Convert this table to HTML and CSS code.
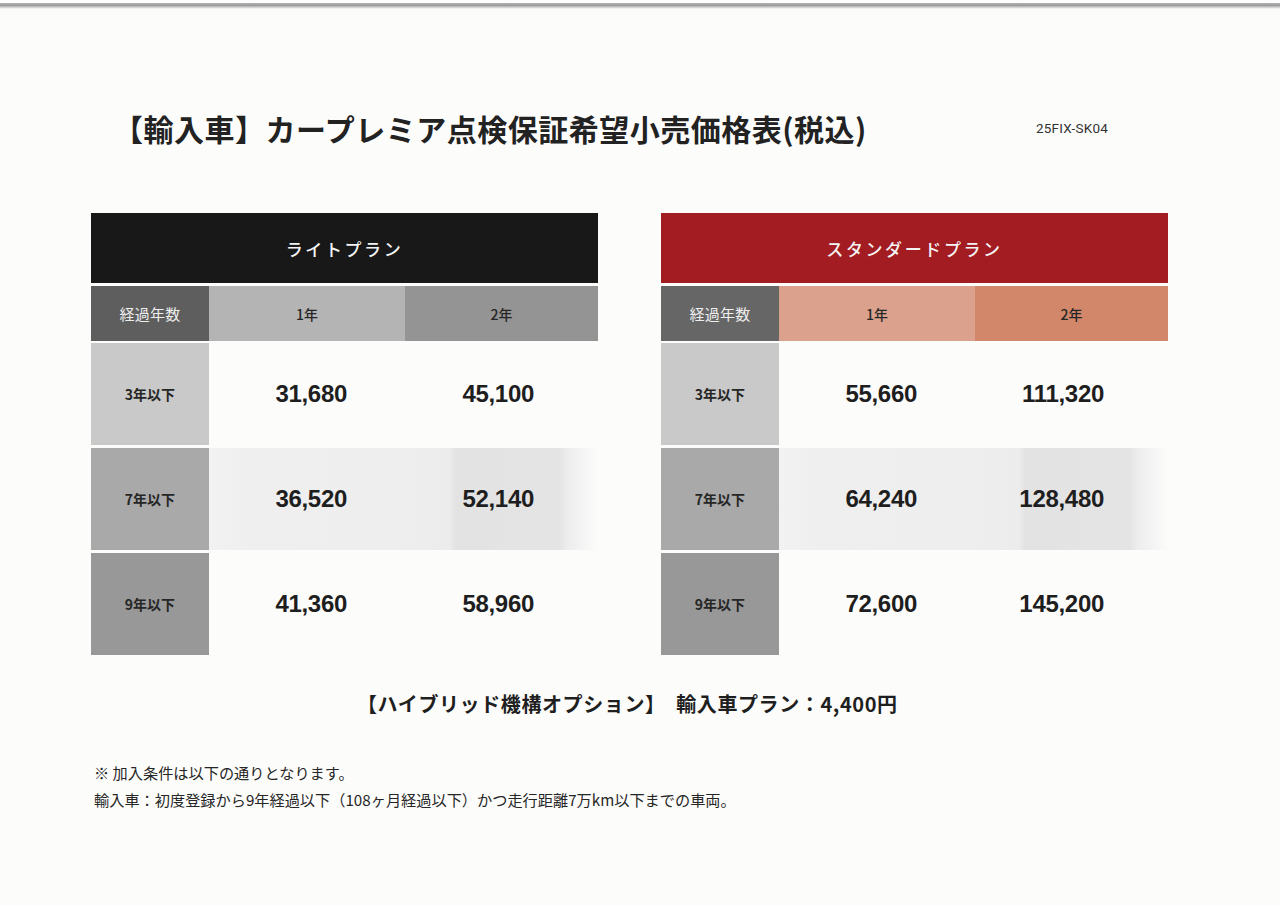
FILE: index.html
```html
<!DOCTYPE html>
<html lang="ja">
<head>
<meta charset="utf-8">
<title>カープレミア点検保証希望小売価格表</title>
<link rel="stylesheet" href="styles.css">
</head>
<body>
<div class="scanline"></div>
<header class="head">
  <h1 class="title">【輸入車】カープレミア点検保証希望小売価格表(税込)</h1>
  <span class="code">25FIX-SK04</span>
</header>

<main class="tables">
  <section class="plan plan-lite">
    <div class="plan-name">ライトプラン</div>
    <div class="sub sub-label">経過年数</div>
    <div class="sub sub-y1">1年</div>
    <div class="sub sub-y2">2年</div>

    <div class="rl rl-3">3年以下</div>
    <div class="val v1">31,680</div>
    <div class="val v2">45,100</div>

    <div class="rl rl-7">7年以下</div>
    <div class="val v1 band1">36,520</div>
    <div class="val v2 band2">52,140</div>

    <div class="rl rl-9">9年以下</div>
    <div class="val v1">41,360</div>
    <div class="val v2">58,960</div>
  </section>

  <section class="plan plan-std">
    <div class="plan-name">スタンダードプラン</div>
    <div class="sub sub-label">経過年数</div>
    <div class="sub sub-y1">1年</div>
    <div class="sub sub-y2">2年</div>

    <div class="rl rl-3">3年以下</div>
    <div class="val v1">55,660</div>
    <div class="val v2">111,320</div>

    <div class="rl rl-7">7年以下</div>
    <div class="val v1 band1">64,240</div>
    <div class="val v2 band2">128,480</div>

    <div class="rl rl-9">9年以下</div>
    <div class="val v1">72,600</div>
    <div class="val v2">145,200</div>
  </section>
</main>

<p class="hybrid">【ハイブリッド機構オプション】　輸入車プラン：4,400円</p>

<div class="notes">
  <p>※ 加入条件は以下の通りとなります。</p>
  <p>輸入車：初度登録から9年経過以下（108ヶ月経過以下）かつ走行距離7万km以下までの車両。</p>
</div>
</body>
</html>
```

FILE: styles.css
```css
html, body {
  margin: 0;
  padding: 0;
}
body {
  width: 1280px;
  height: 905px;
  overflow: hidden;
  background: #fcfcfb;
  color: #1f1f1f;
  font-family: "Noto Sans CJK JP", "Noto Sans", sans-serif;
}
p { margin: 0; }

.scanline {
  height: 6px;
  margin-top: 3px;
  background: linear-gradient(#b5b5b5, #9a9a9a 40%, #d6d6d6 75%, rgba(240,240,240,0));
}

.head {
  display: flex;
  align-items: center;
  justify-content: space-between;
  height: 42px;
  margin-top: 98px;
  padding: 0 172px 0 113px;
}
.title {
  margin: 0;
  font-size: 30px;
  font-weight: 700;
  letter-spacing: 0.5px;
  line-height: 42px;
  color: #222;
}
.code {
  font-family: "Roboto", "Liberation Sans", sans-serif;
  font-size: 13.5px;
  color: #333;
  letter-spacing: 0.2px;
}

.tables {
  display: flex;
  gap: 63px;
  margin-top: 64px;
  padding-left: 91px;
}
.plan {
  width: 507px;
  display: grid;
  grid-template-columns: 118px 196px 193px;
  grid-template-rows: 70px 54px 102px 102px 102px;
  row-gap: 3px;
}
.plan .sub { margin-bottom: -1px; }
.plan-name {
  grid-column: 1 / -1;
  display: flex;
  align-items: center;
  justify-content: center;
  color: #f4f4f4;
  font-size: 17px;
  font-weight: 500;
  letter-spacing: 2.6px;
}
.plan-lite .plan-name { background: #181818; }
.plan-std .plan-name { background: #a31c22; }

.sub {
  display: flex;
  align-items: center;
  justify-content: center;
  font-size: 14px;
  font-weight: 500;
  color: #262626;
}
.sub-label {
  color: #eeeeee;
  font-size: 15px;
  font-weight: 400;
  letter-spacing: 0.3px;
}
.plan-lite .sub-label { background: #5e5e5e; }
.plan-lite .sub-y1 { background: #b4b4b4; }
.plan-lite .sub-y2 { background: #949494; }
.plan-std .sub-label { background: #666666; }
.plan-std .sub-y1 { background: #dba18d; }
.plan-std .sub-y2 { background: #d2876b; }

.rl {
  display: flex;
  align-items: center;
  justify-content: center;
  font-size: 14px;
  font-weight: 700;
  color: #262626;
}
.rl-3 { background: #c9c9c9; }
.rl-7 { background: #a9a9a9; }
.rl-9 { background: #989898; }

.val {
  display: flex;
  align-items: center;
  justify-content: flex-end;
  font-family: "Liberation Sans", Arial, sans-serif;
  font-weight: 700;
  font-size: 24px;
  letter-spacing: -0.3px;
  color: #1e1e1e;
}
.v1 { padding-right: 58px; }
.v2 { padding-right: 64px; }

.band1 {
  background: linear-gradient(to right, #f2f2f2, #efefef 20%, #eeeeee 100%);
}
.band2 {
  background: linear-gradient(to right, #eeeeee 0, #ececec 23%, #e3e3e3 26%, #e4e4e4 80%, #ededed 84%, #f4f4f4 92%, rgba(252,252,251,0) 100%);
}

.hybrid {
  margin-top: 36px;
  padding-left: 357px;
  font-size: 20px;
  font-weight: 700;
  letter-spacing: 0.6px;
  line-height: 26px;
  color: #1f1f1f;
}

.notes {
  margin-top: 42px;
  padding-left: 94px;
  font-size: 15.2px;
  line-height: 27px;
  color: #262626;
}
```
